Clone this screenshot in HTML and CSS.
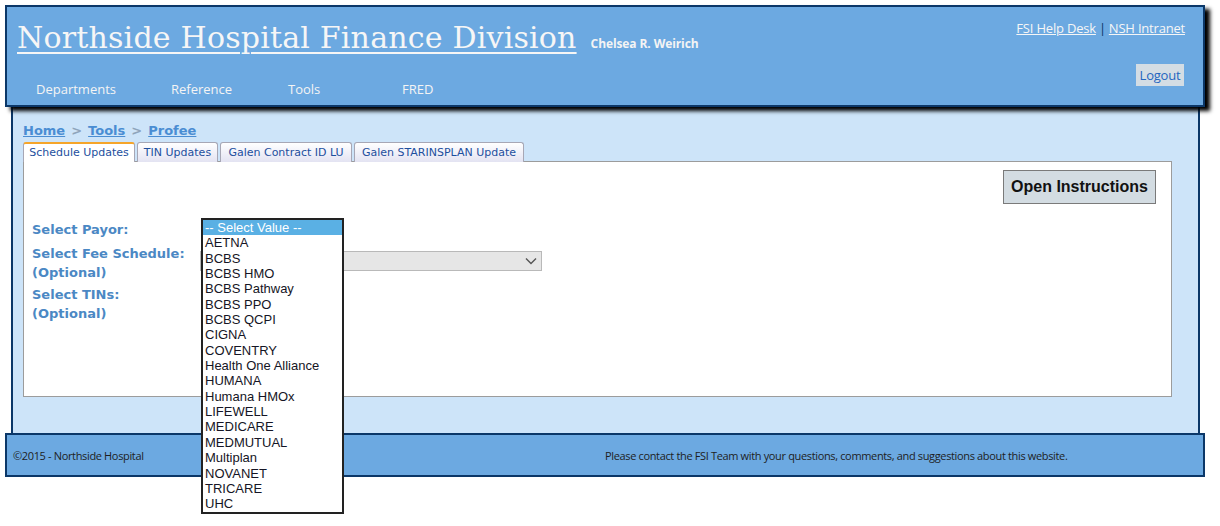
FILE: index.html
```html
<!DOCTYPE html>
<html>
<head>
<meta charset="utf-8">
<title>Northside Hospital Finance Division</title>
<link rel="stylesheet" href="styles.css">
</head>
<body>
<div class="header">
  <div class="header-left">
    <div class="brand">
      <a class="title" href="#">Northside Hospital Finance Division</a>
      <span class="user">Chelsea R. Weirich</span>
    </div>
    <ul class="nav">
      <li>Departments</li>
      <li>Reference</li>
      <li>Tools</li>
      <li>FRED</li>
    </ul>
  </div>
  <div class="header-right">
    <div class="links"><a href="#">FSI Help Desk</a><span class="sep">|</span><a href="#">NSH Intranet</a></div>
    <span class="logout">Logout</span>
  </div>
</div>

<div class="content">
  <div class="crumbs"><a href="#">Home</a><span class="gt">&gt;</span><a href="#">Tools</a><span class="gt">&gt;</span><a href="#">Profee</a></div>
  <div class="tabs">
    <span class="tab active t1">Schedule Updates</span>
    <span class="tab t2">TIN Updates</span>
    <span class="tab t3">Galen Contract ID LU</span>
    <span class="tab t4">Galen STARINSPLAN Update</span>
  </div>
  <div class="panel">
    <div class="btn-row"><span class="btn">Open Instructions</span></div>
    <div class="form">
      <div class="label">Select Payor:</div>
      <div class="select-wrap">
        <ul class="list">
          <li class="sel">-- Select Value --</li>
          <li>AETNA</li>
          <li>BCBS</li>
          <li>BCBS HMO</li>
          <li>BCBS Pathway</li>
          <li>BCBS PPO</li>
          <li>BCBS QCPI</li>
          <li>CIGNA</li>
          <li>COVENTRY</li>
          <li>Health One Alliance</li>
          <li>HUMANA</li>
          <li>Humana HMOx</li>
          <li>LIFEWELL</li>
          <li>MEDICARE</li>
          <li>MEDMUTUAL</li>
          <li>Multiplan</li>
          <li>NOVANET</li>
          <li>TRICARE</li>
          <li>UHC</li>
        </ul>
      </div>
      <div class="label">Select Fee Schedule:<br>(Optional)</div>
      <div class="select-wrap fee">
        <div class="select"><svg class="chev" width="12" height="8" viewBox="0 0 12 8"><path d="M1 1.5 L6 6.5 L11 1.5" fill="none" stroke="#555" stroke-width="1.4"/></svg></div>
      </div>
      <div class="label">Select TINs:<br>(Optional)</div>
      <div></div>
    </div>
  </div>
</div>

<div class="footer">
  <div class="fcell first">&copy;2015 - Northside Hospital</div>
  <div class="fcell">Please contact the FSI Team with your questions, comments, and suggestions about this website.</div>
</div>
</body>
</html>
```

FILE: styles.css
```css
* { box-sizing: border-box; }
html, body { min-height: 526px; }
body {
  margin: 0;
  padding: 5px 0 0 5px;
  background: #fff;
  font-family: "Open Sans", "Noto Sans", sans-serif;
}
ul { list-style: none; margin: 0; padding: 0; }

.header {
  position: relative;
  z-index: 2;
  width: 1200px;
  height: 102px;
  background: #6ca9e1;
  border: 2px solid #0b3768;
  box-shadow: 5px 4px 4px #000;
  display: flex;
  justify-content: space-between;
  padding: 0 18px 0 10px;
}
.brand {
  display: flex;
  align-items: baseline;
  padding-top: 13px;
  height: 58px;
}
.title {
  font-family: "DejaVu Serif", serif;
  font-size: 30px;
  line-height: 36px;
  color: #f6f6f6;
  text-decoration: underline;
  text-decoration-thickness: 2px;
  text-underline-offset: 4px;
  letter-spacing: 0.2px;
}
.user {
  margin-left: 14px;
  font-size: 12px;
  font-weight: bold;
  color: #f4f4f4;
  letter-spacing: -0.1px;
}
.nav {
  display: grid;
  grid-template-columns: 135px 117px 114px auto;
  padding-left: 19px;
  font-size: 13px;
  line-height: 18px;
  color: #f4f4f4;
  margin-top: 15px;
}
.header-right {
  display: flex;
  flex-direction: column;
  align-items: flex-end;
  padding-top: 12px;
}
.links {
  font-size: 13px;
  line-height: 18px;
  letter-spacing: -0.2px;
}
.links a { color: #f6f6f6; }
.sep { color: #0b3768; margin: 0 3px; }
.logout {
  margin-top: 27px;
  margin-right: 1px;
  width: 48px;
  height: 22px;
  background: #d4dde4;
  color: #2466c0;
  font-size: 13px;
  line-height: 22px;
  text-align: center;
  letter-spacing: -0.2px;
}

.content {
  position: relative;
  z-index: 1;
  width: 1189px;
  margin-left: 6px;
  height: 326px;
  background: #cde4f9;
  border-left: 2px solid #0b3768;
  border-right: 2px solid #0b3768;
  padding: 16px 0 0 10px;
}
.crumbs {
  font-family: "DejaVu Sans", Verdana, sans-serif;
  font-weight: bold;
  font-size: 13px;
  line-height: 16px;
  height: 19px;
}
.crumbs a { color: #4a8dd3; }
.gt { color: #8fa4bb; margin: 0 6px; }
.tabs {
  display: flex;
  gap: 2px;
  height: 20px;
  position: relative;
  z-index: 1;
}
.tab {
  height: 20px;
  font-family: "DejaVu Sans", Verdana, sans-serif;
  font-size: 11px;
  line-height: 19px;
  text-align: center;
  color: #1d4f9e;
  border: 1px solid #a7a7b5;
  border-bottom: none;
  border-radius: 3px 3px 0 0;
  background: linear-gradient(#ffffff, #e3e3f2);
}
.t1 { width: 112px; }
.t2 { width: 81px; }
.t3 { width: 132px; }
.t4 { width: 170px; }
.tab.active {
  background: #fff;
  border-top: 2px solid #f5a52a;
  line-height: 18px;
}
.panel {
  width: 1149px;
  height: 236px;
  margin-top: -1px;
  background: #fff;
  border: 1px solid #9c9c9c;
  padding: 8px 15px 0 8px;
}
.btn-row { display: flex; justify-content: flex-end; }
.btn {
  width: 153px;
  height: 34px;
  background: #d3dce2;
  border: 1px solid #7a7a7a;
  font-family: "Liberation Sans", Arial, sans-serif;
  font-weight: bold;
  font-size: 16px;
  line-height: 32px;
  text-align: center;
  color: #111;
}
.form {
  margin-top: 16px;
  display: grid;
  grid-template-columns: 168px 342px;
  grid-template-rows: 24px 41px auto;
}
.label {
  font-family: "DejaVu Sans", Verdana, sans-serif;
  font-weight: bold;
  font-size: 13px;
  line-height: 19px;
  color: #4b88c4;
}
.select-wrap { position: relative; }
.select {
  height: 20px;
  background: #e6e6e6;
  border: 1px solid #b9b9b9;
  position: relative;
}
.fee .select { margin-top: 7px; }
.chev { position: absolute; right: 4px; top: 5px; }
.list {
  position: absolute;
  left: 1px;
  top: -2px;
  width: 143px;
  border: 2px solid #222;
  background: #fff;
  font-family: "Liberation Sans", Arial, sans-serif;
  font-size: 13px;
  line-height: 15.35px;
  color: #151525;
  z-index: 5;
}
.list li { padding-left: 2px; white-space: nowrap; }
.list li.sel { background: #5ab0e4; color: #fff; }

.footer {
  width: 1200px;
  height: 44px;
  background: #6ca9e1;
  border: 2px solid #0b3768;
  display: grid;
  grid-template-columns: 1fr 1fr;
  align-items: center;
  font-size: 11px;
  color: #1e1e1e;
  letter-spacing: -0.35px;
}
.fcell.first { padding-left: 6px; }
```
